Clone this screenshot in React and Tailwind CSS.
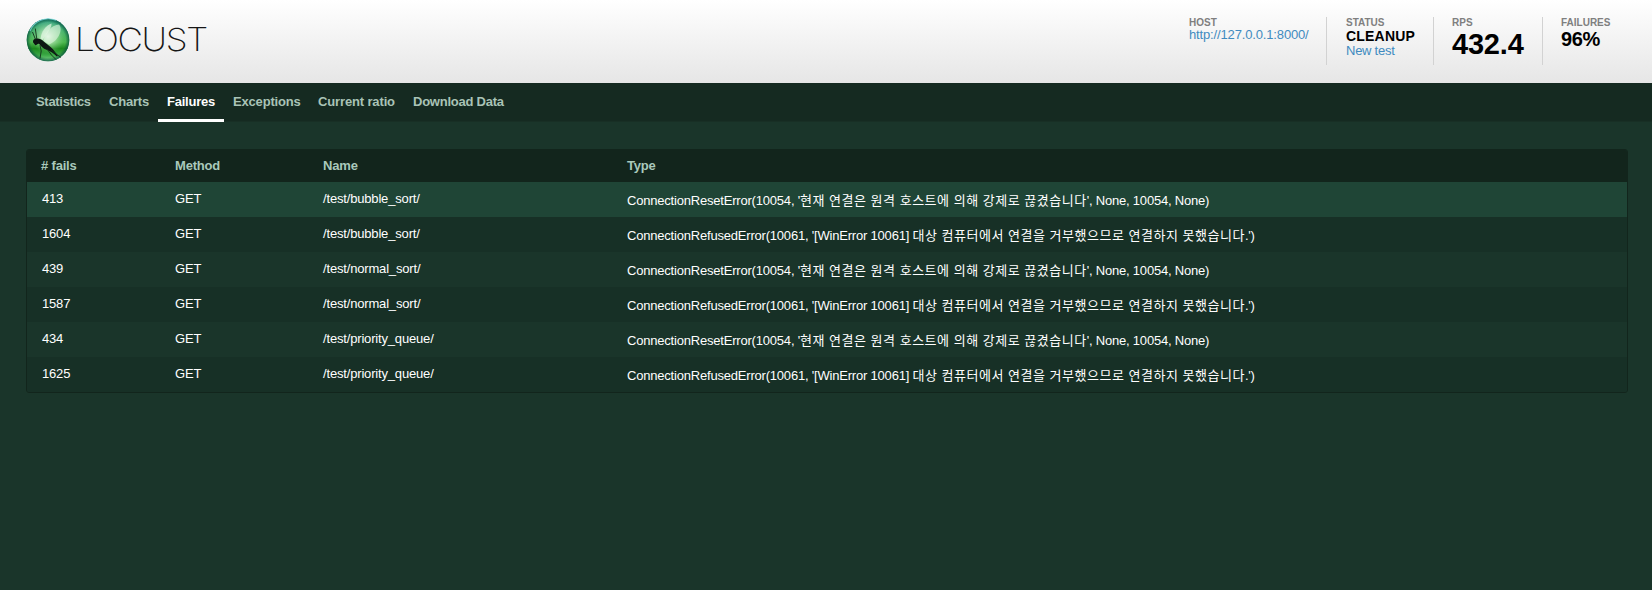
const tabs = [
  { label: "Statistics", width: "w-[73px]", tracking: "tracking-[-0.3px]" },
  { label: "Charts", width: "w-[58px]", tracking: "tracking-[-0.2px]" },
  { label: "Failures", width: "w-[66px]", tracking: "tracking-[-0.24px]", active: true },
  { label: "Exceptions", width: "w-[85px]", tracking: "tracking-[-0.18px]" },
  { label: "Current ratio", width: "w-[95px]", tracking: "tracking-[-0.14px]" },
  { label: "Download Data", width: "w-[110px]", tracking: "tracking-[-0.24px]" },
];

const reset = ["ConnectionResetError(10054, '", "현재 연결은 원격 호스트에 의해 강제로 끊겼습니다", "', None, 10054, None)"];
const refused = ["ConnectionRefusedError(10061, '[WinError 10061] ", "대상 컴퓨터에서 연결을 거부했으므로 연결하지 못했습니다", ".')"];

const rows = [
  { fails: 413, name: "/test/bubble_sort/", type: reset },
  { fails: 1604, name: "/test/bubble_sort/", type: refused },
  { fails: 439, name: "/test/normal_sort/", type: reset },
  { fails: 1587, name: "/test/normal_sort/", type: refused },
  { fails: 434, name: "/test/priority_queue/", type: reset },
  { fails: 1625, name: "/test/priority_queue/", type: refused },
];

function rowColor(i) {
  if (i === 0) return "bg-[#1f4536]";
  return i % 2 ? "bg-[#173026]" : "bg-[#1a352a]";
}

function Logo() {
  return (
    <div className="flex items-center">
      <svg className="size-[44px]" viewBox="0 0 44 44">
        <defs>
          <linearGradient id="orb" x1="0" y1="0" x2="0" y2="1">
            <stop offset="0" stopColor="#2b9a86" />
            <stop offset="0.3" stopColor="#45b06a" />
            <stop offset="0.55" stopColor="#4db84f" />
            <stop offset="0.7" stopColor="#1d8a1f" />
            <stop offset="0.85" stopColor="#3aa845" />
            <stop offset="1" stopColor="#7fd48c" />
          </linearGradient>
          <radialGradient id="shine" cx="0.5" cy="0.42" r="0.4">
            <stop offset="0" stopColor="#fff" stopOpacity="0.85" />
            <stop offset="0.5" stopColor="#c9f0c8" stopOpacity="0.5" />
            <stop offset="1" stopColor="#8fdc8a" stopOpacity="0" />
          </radialGradient>
          <radialGradient id="rim" cx="0.5" cy="0.5" r="0.5">
            <stop offset="0.82" stopColor="#0b5a35" stopOpacity="0" />
            <stop offset="1" stopColor="#0b5546" stopOpacity="0.85" />
          </radialGradient>
        </defs>
        <circle cx="22" cy="22" r="21.3" fill="url(#orb)" />
        <circle cx="22" cy="22" r="21.3" fill="url(#shine)" />
        <circle cx="22" cy="22" r="21.3" fill="url(#rim)" />
        <path d="M4 13A20 20 0 0 1 30 2.3" stroke="#7fe0e4" strokeWidth="1.2" fill="none" opacity="0.75" />
        <path d="M14.5 21C15 14 19.5 7.5 25.5 5.5C26 9 21 16 16.5 22Z" fill="#e4f8e4" opacity="0.7" />
        <path d="M17.5 23C19 14 26 7 33 6.5C37.5 12 32 23 23 26.5Z" fill="#e2f7e2" opacity="0.6" />
        <path d="M7 24.2C6.6 22 8.6 20.4 11 20.6C13.5 20.5 15.5 21.5 17.5 23.2C20.5 25.7 24.5 28.5 27 31.2L32 38L30.5 38.3C28 35.5 24.5 33.4 20.5 31.8C17 30.3 15 28.2 13.3 25.9C11.5 25.3 11 27 9.3 27.2Z" fill="#0d1612" />
        <path d="M9.5 21.5L6.5 14M10.8 21L9.3 10.5M14 27L15.2 33L14 40.5M21 31L25.5 37L30 41.5M25 32L31 36.5L35 39.5" stroke="#12301b" strokeWidth="0.9" fill="none" />
      </svg>
      <span className="ml-[5px] origin-left scale-x-[1.095] font-['Inter',sans-serif] text-[32px] leading-[44px] font-extralight tracking-[-1.2px] text-[#161616]">
        LOCUST
      </span>
    </div>
  );
}

function Stat({ label, className, children }) {
  return (
    <div className={`h-12 ${className}`}>
      <div className="pt-px text-[10px] leading-[9px] font-bold text-[#7f7f7f]">{label}</div>
      {children}
    </div>
  );
}

export default function App() {
  return (
    <div className="flex h-[590px] w-[1652px] flex-col bg-[#1a352a] font-['Liberation_Sans','Noto_Sans_CJK_KR',sans-serif] text-[13px] whitespace-nowrap text-white">
      <header className="flex h-[83px] shrink-0 items-start justify-between bg-linear-to-b from-white to-[#e6e6e6] pl-[26px] text-black">
        <div className="pt-[18px]">
          <Logo />
        </div>
        <div className="flex pt-[17px]">
          <Stat label="HOST" className="w-[137px]">
            <a className="block leading-[15px] tracking-[-0.15px] text-[#3f8bc0]">http://127.0.0.1:8000/</a>
          </Stat>
          <Stat label="STATUS" className="w-[107px] border-l border-[#d2d2d2] pl-[19px]">
            <div className="pt-[2px] text-[14px] leading-[14px] font-bold tracking-[0.2px]">CLEANUP</div>
            <a className="block leading-[15px] tracking-[-0.25px] text-[#3f8bc0]">New test</a>
          </Stat>
          <Stat label="RPS" className="w-[109px] border-l border-[#d2d2d2] pl-[18px]">
            <div className="text-[29px] leading-[35px] font-bold tracking-[-0.2px]">432.4</div>
          </Stat>
          <Stat label="FAILURES" className="w-[110px] border-l border-[#d2d2d2] pl-[18px]">
            <div className="text-[20px] leading-[24px] font-bold tracking-[-0.4px]">96%</div>
          </Stat>
        </div>
      </header>

      <nav className="flex h-[39px] shrink-0 border-b border-[#182f25] bg-[#152a21] pl-[27px] font-bold">
        {tabs.map((t) => (
          <a
            key={t.label}
            className={`h-[39px] pl-[9px] leading-[37px] ${t.tracking} ${t.width} ${t.active ? "border-b-[3px] border-white text-white" : "text-[#a9c3b6]"}`}
          >
            {t.label}
          </a>
        ))}
      </nav>

      <main className="px-[26px] pt-[27px]">
        <div className="w-[1602px] overflow-hidden rounded-[3px] border border-[#12251c]">
          <div className="grid h-8 grid-cols-[134px_148px_303px_1fr] bg-[#12251c] pl-[14px] leading-[32px] font-bold tracking-[-0.18px] text-[#a9c9bb]">
            <div># fails</div>
            <div>Method</div>
            <div>Name</div>
            <div className="pl-px">Type</div>
          </div>
          {rows.map((r, i) => (
            <div key={r.fails} className={`grid h-[35px] grid-cols-[134px_148px_303px_1fr] pl-[14px] leading-[33px] tracking-[-0.17px] ${rowColor(i)}`}>
              <div className="pl-px">{r.fails}</div>
              <div>GET</div>
              <div>{r.name}</div>
              <div className="pt-[2px] pl-px tracking-[-0.2px]">
                {r.type[0]}
                <span className="tracking-[0.51px]">{r.type[1]}</span>
                {r.type[2]}
              </div>
            </div>
          ))}
        </div>
      </main>
    </div>
  );
}
